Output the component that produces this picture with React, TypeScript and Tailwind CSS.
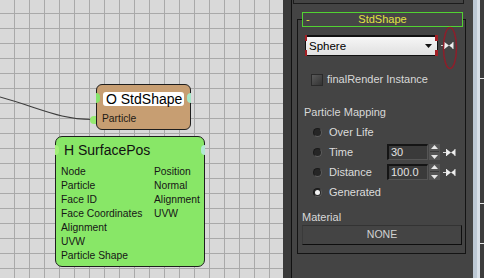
import React from "react";

const F = { fontFamily: '"Liberation Sans", Arial, sans-serif' };

function Grid() {
  const vs: number[] = [];
  for (let x = 14; x < 283; x += 15) vs.push(x);
  const hs: number[] = [];
  for (let y = 13; y < 278; y += 15) hs.push(y);
  return (
    <svg className="absolute inset-0" width={283} height={278}>
      {vs.map((x) => (
        <line key={"v" + x} x1={x + 0.5} y1={0} x2={x + 0.5} y2={278} stroke="#a9a9a9" strokeWidth={1} />
      ))}
      {hs.map((y) => (
        <line key={"h" + y} x1={0} y1={y + 0.5} x2={283} y2={y + 0.5} stroke="#a9a9a9" strokeWidth={1} />
      ))}
      <path d="M0,97 C40,108 60,119.5 92,119.5" fill="none" stroke="#3c3c3c" strokeWidth={1.1} />
    </svg>
  );
}

function Pin() {
  return (
    <svg width={13} height={9} viewBox="0 0 13 9" className="shrink-0">
      <rect x={0} y={4} width={3} height={1} fill="#d8d8d8" />
      <rect x={3} y={1} width={1} height={7} fill="#e8e8e8" />
      <polygon points="4,1.5 8,4.5 4,7.5" fill="#f0f0f0" />
      <polygon points="12,1.5 8,4.5 12,7.5" fill="#f0f0f0" />
      <rect x={11.5} y={1} width={1} height={7} fill="#e8e8e8" />
    </svg>
  );
}

function Radio({ on }: { on?: boolean }) {
  return (
    <div className="w-[9px] h-[9px] rounded-full bg-[#262626] border border-t-[#1a1a1a] border-l-[#1a1a1a] border-b-[#5e5e5e] border-r-[#5e5e5e] flex items-center justify-center shrink-0">
      {on && <div className="w-[5px] h-[5px] rounded-full bg-[#f2f2f2]" />}
    </div>
  );
}

function Spinner({ value }: { value: string }) {
  return (
    <div className="flex items-center">
      <div className="w-[41px] h-[16px] bg-[#3a3a3a] border-t-2 border-l-2 border-t-[#151515] border-l-[#151515] border-b border-r border-b-[#555] border-r-[#555] text-[11px] leading-[13px] text-[#e2e2e2] pl-[2px]">
        {value}
      </div>
      <div className="ml-[1px] w-[11px] h-[16px] bg-[#555] flex flex-col items-center justify-around">
        <svg width={7} height={4} viewBox="0 0 7 4"><polygon points="0,4 3.5,0 7,4" fill="#e8e8e8" /></svg>
        <div className="w-[9px] h-px bg-[#3a3a3a]" />
        <svg width={7} height={4} viewBox="0 0 7 4"><polygon points="0,0 3.5,4 7,0" fill="#e8e8e8" /></svg>
      </div>
      <div className="ml-[3px]">
        <Pin />
      </div>
    </div>
  );
}

export default function App() {
  return (
    <div className="w-[484px] h-[278px] flex overflow-hidden" style={F}>
      {/* Node canvas */}
      <div className="relative w-[283px] h-[278px] bg-[#d9d9d9] overflow-hidden shrink-0">
        <Grid />
        {/* StdShape node */}
        <div className="absolute left-[96px] top-[84px] w-[95px] h-[46px] rounded-[6px] border border-[#1e1e1e] bg-[#c79e72]">
          <div className="ml-[6px] mt-[7px] w-[81px] h-[14px] rounded-[3px] bg-white text-[14px] leading-[14px] text-black pl-[3px] whitespace-nowrap">
            O StdShape
          </div>
          <div className="ml-[5px] mt-[7px] text-[10.3px] leading-[12px] text-[#1e1a14]">Particle</div>
          <div className="absolute -left-px top-[8px] w-[4px] h-[10px] rounded-r-full bg-[#86e46a]" />
          <div className="absolute -right-px top-[8px] w-[4px] h-[10px] rounded-l-full bg-[#a6e6c6]" />
          <div className="absolute -left-[7px] top-[31px] w-[6px] h-[8px] rounded-l-full bg-[#96ea72]" />
        </div>
        {/* SurfacePos node */}
        <div className="absolute left-[55px] top-[136px] w-[150px] h-[131px] rounded-[7px] border border-[#1e1e1e] bg-[#88e767]">
          <div className="ml-[8px] mt-[5px] text-[14px] leading-[16px] text-[#111]">H SurfacePos</div>
          <div className="mt-[7px] ml-[5px] flex text-[10.3px] leading-[14px] text-[#161616]">
            <div className="w-[93px] flex flex-col whitespace-nowrap">
              <span>Node</span>
              <span>Particle</span>
              <span>Face ID</span>
              <span>Face Coordinates</span>
              <span>Alignment</span>
              <span>UVW</span>
              <span>Particle Shape</span>
            </div>
            <div className="flex flex-col whitespace-nowrap">
              <span>Position</span>
              <span>Normal</span>
              <span>Alignment</span>
              <span>UVW</span>
            </div>
          </div>
          <div className="absolute -left-px top-[8px] w-[4px] h-[10px] rounded-r-full bg-[#a4f07a]" />
          <div className="absolute -right-px top-[8px] w-[4px] h-[10px] rounded-l-full bg-[#b2e8d2]" />
        </div>
      </div>

      {/* Dark strip + separator */}
      <div className="w-[8px] h-full bg-[#3a3a3a] shrink-0" />
      <div className="w-px h-full bg-[#111] shrink-0" />

      {/* Command panel */}
      <div className="relative w-[181px] h-full bg-[#444444] shrink-0 text-[11px] text-[#dcdcdc]">
        <div className="ml-px w-[171px] h-[4px] border-x border-b border-[#1c1c1c]" />
        {/* Rollout */}
        <div className="ml-[5px] mt-[15px] w-[169px] h-[235px] border border-[#141414] flex flex-col">
          <div className="-mt-[8px] ml-[4px] w-[161px] h-[15px] border border-[#52d232] bg-[#464646] relative flex items-center justify-center text-[#e2e244] text-[11px] leading-[13px]">
            <span className="absolute left-[3px] top-0">-</span>
            <span>StdShape</span>
          </div>
          {/* dropdown row */}
          <div className="mt-[8px] ml-[7px] flex items-center">
            <div className="relative w-[133px] h-[21px] border border-[#111] border-t-2 bg-[linear-gradient(#f6f6f6,#e0e0e0)] flex items-center">
              <span className="ml-[3px] text-[11.5px] leading-[14px] text-black">Sphere</span>
              <svg className="ml-auto mr-[5px]" width={7} height={4} viewBox="0 0 7 4"><polygon points="0,0 7,0 3.5,4" fill="#111" /></svg>
              <div className="absolute -left-px -top-[2px] w-[2px] h-[6px] bg-[#a31e24]" />
              <div className="absolute -left-px -bottom-px w-[2px] h-[6px] bg-[#a31e24]" />
              <div className="absolute -right-px -top-[2px] w-[3px] h-[6px] bg-[#a31e24]" />
              <div className="absolute -right-px -bottom-px w-[3px] h-[6px] bg-[#a31e24]" />
            </div>
            <div className="ml-[3px]">
              <Pin />
            </div>
          </div>
          {/* checkbox */}
          <div className="mt-[17px] ml-[13px] flex items-center">
            <div className="w-[12px] h-[12px] border border-[#2a2a2a] bg-[linear-gradient(135deg,#5a5a5a,#333)]" />
            <span className="ml-[4px] leading-[13px] text-[#d8d8d8]">finalRender Instance</span>
          </div>
          {/* Particle mapping */}
          <div className="mt-[20px] ml-[6px] leading-[13px] text-[#d8d8d8]">Particle Mapping</div>
          <div className="mt-[3px] ml-[15px] flex flex-col">
            <div className="h-[20px] flex items-center">
              <Radio />
              <span className="ml-[7px] leading-[13px]">Over Life</span>
            </div>
            <div className="h-[20px] flex items-center">
              <Radio />
              <span className="ml-[7px] w-[58px] leading-[13px]">Time</span>
              <Spinner value="30" />
            </div>
            <div className="h-[20px] flex items-center">
              <Radio />
              <span className="ml-[7px] w-[58px] leading-[13px]">Distance</span>
              <Spinner value="100.0" />
            </div>
            <div className="h-[20px] flex items-center">
              <Radio on />
              <span className="ml-[7px] leading-[13px]">Generated</span>
            </div>
          </div>
          {/* Material */}
          <div className="mt-[9px] ml-[4px] leading-[13px] text-[#d8d8d8]">Material</div>
          <div className="mt-px ml-[4px] w-[160px] h-[20px] border border-t-[#333] border-l-[#3a3a3a] border-b-[#0e0e0e] border-r-[#0e0e0e] flex items-center justify-center text-[10.5px] text-[#d2d2d2]">
            NONE
          </div>
        </div>
        {/* red ellipse annotation */}
        <svg className="absolute left-[150px] top-[26px]" width={16} height={44} viewBox="0 0 16 44">
          <ellipse cx={8} cy={22} rx={6.5} ry={20.5} fill="none" stroke="#8e1e2a" strokeWidth={1.5} />
        </svg>
      </div>

      {/* scrollbar-ish strips */}
      <div className="w-[7px] h-full bg-[#c6d0da] shrink-0 flex">
        <div className="w-[4px] h-full bg-[#bcc8d4]" />
        <div className="w-[3px] h-full bg-[#d8e0e8]" />
      </div>
      <div className="w-[4px] h-full bg-[#3c3c3c] shrink-0 flex flex-col">
        <div className="mt-[78px] h-px bg-[#e8e8e8]" />
        <div className="mt-[124px] h-px bg-[#e8e8e8]" />
        <div className="mt-[39px] h-px bg-[#e8e8e8]" />
      </div>
    </div>
  );
}
